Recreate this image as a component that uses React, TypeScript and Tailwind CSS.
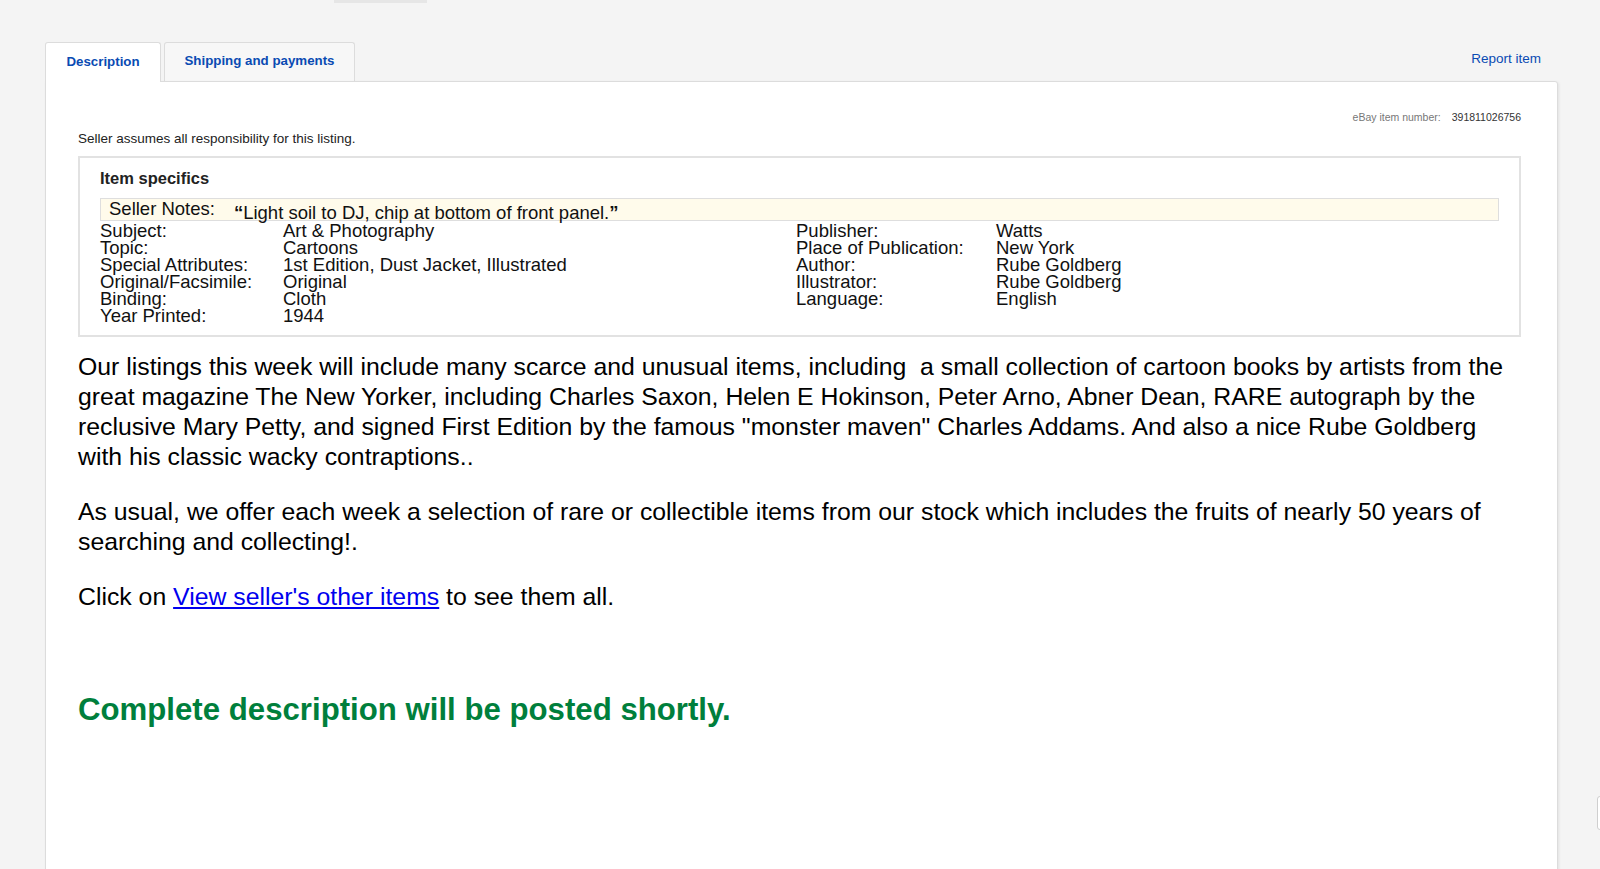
import React from "react";

const left: [string, string][] = [
  ["Subject:", "Art & Photography"],
  ["Topic:", "Cartoons"],
  ["Special Attributes:", "1st Edition, Dust Jacket, Illustrated"],
  ["Original/Facsimile:", "Original"],
  ["Binding:", "Cloth"],
  ["Year Printed:", "1944"],
];
const right: [string, string][] = [
  ["Publisher:", "Watts"],
  ["Place of Publication:", "New York"],
  ["Author:", "Rube Goldberg"],
  ["Illustrator:", "Rube Goldberg"],
  ["Language:", "English"],
];

export default function App() {
  return (
    <div
      className="relative h-[869px] w-[1600px] overflow-hidden bg-[#f4f4f4] text-[#111]"
      style={{ fontFamily: '"Liberation Sans", Arial, Helvetica, sans-serif' }}
    >
      <div className="ml-[334px] h-[3px] w-[93px] bg-[#e6e6e6]" />
      <div className="ml-[45px] mr-[42px] mt-[39px] flex flex-col">
        <div className="flex items-end justify-between">
          <div className="flex items-end gap-[3px]">
            <div className="relative z-10 -mb-px flex h-[40px] w-[116px] items-center justify-center rounded-t-[3px] border border-b-0 border-[#dcdcdc] bg-white pb-[2px] text-[13.3px] font-bold text-[#0a4bb3]">
              Description
            </div>
            <div className="flex h-[39px] w-[191px] items-center justify-center rounded-t-[3px] border border-b-0 border-[#dcdcdc] bg-[#f7f7f7] pb-[2px] text-[13.3px] font-bold text-[#0a4bb3]">
              Shipping and payments
            </div>
          </div>
          <div className="mb-[12px] mr-[17px] text-[13.5px] text-[#0a4bb3]">Report item</div>
        </div>
        <div className="h-[800px] rounded-tr-[3px] border border-[#dcdcdc] bg-white pl-[32px] pr-[36px] shadow-[1px_1px_3px_rgba(0,0,0,0.08)]">
          <div className="flex justify-end pt-[29px] text-[10.5px] leading-[13px]">
            <span className="text-[#777]">eBay item number:</span>
            <span className="ml-[11px] text-[#333]">391811026756</span>
          </div>
          <div className="mt-[7px] text-[13.5px] leading-[16px] text-[#222]">
            Seller assumes all responsibility for this listing.
          </div>
          <div className="mt-[9px] h-[181px] border-2 border-[#e2e2e2] px-[20px] pt-[10px]">
            <div className="text-[16.5px] font-bold leading-[20px] text-[#222]">Item specifics</div>
            <div className="mt-[10px] flex h-[23px] items-start border border-[#dedede] bg-[#fffbeb] px-[8px] text-[18.5px] leading-[19px]">
              <span>Seller Notes:</span>
              <span className="ml-[19px] pt-[4px]">
                <b>“</b>Light soil to DJ, chip at bottom of front panel.<b>”</b>
              </span>
            </div>
            <div className="grid grid-cols-[183px_513px_200px_1fr] pt-[1px] text-[18.5px] leading-[17px]">
              {left.map((l, i) => (
                <React.Fragment key={i}>
                  <div>{l[0]}</div>
                  <div>{l[1]}</div>
                  <div>{right[i] ? right[i][0] : ""}</div>
                  <div>{right[i] ? right[i][1] : ""}</div>
                </React.Fragment>
              ))}
            </div>
          </div>
          <div className="mt-[15px] pr-[4px] text-[24.8px] leading-[30px] text-black">
            <p>
              Our listings this week will include many scarce and unusual items, including&nbsp; a small collection
              of cartoon books by artists from the great magazine The New Yorker, including Charles Saxon, Helen E
              Hokinson, Peter Arno, Abner Dean, RARE autograph by the reclusive Mary Petty, and signed First Edition
              by the famous "monster maven" Charles Addams. And also a nice Rube Goldberg with his classic wacky
              contraptions..
            </p>
            <p className="mt-[25px]">
              As usual, we offer each week a selection of rare or collectible items from our stock which includes the
              fruits of nearly 50 years of searching and collecting!.
            </p>
            <p className="mt-[25px]">
              Click on <span className="text-[#0000ee] underline">View seller's other items</span> to see them all.
            </p>
          </div>
          <div className="mt-[80px] text-[31.2px] font-bold leading-[36px] text-[#007f3c]">
            Complete description will be posted shortly.
          </div>
        </div>
      </div>
      <div className="absolute right-[-6px] top-[796px] h-[34px] w-[9px] rounded-[3px] border border-[#cfcfcf] bg-white" />
    </div>
  );
}
